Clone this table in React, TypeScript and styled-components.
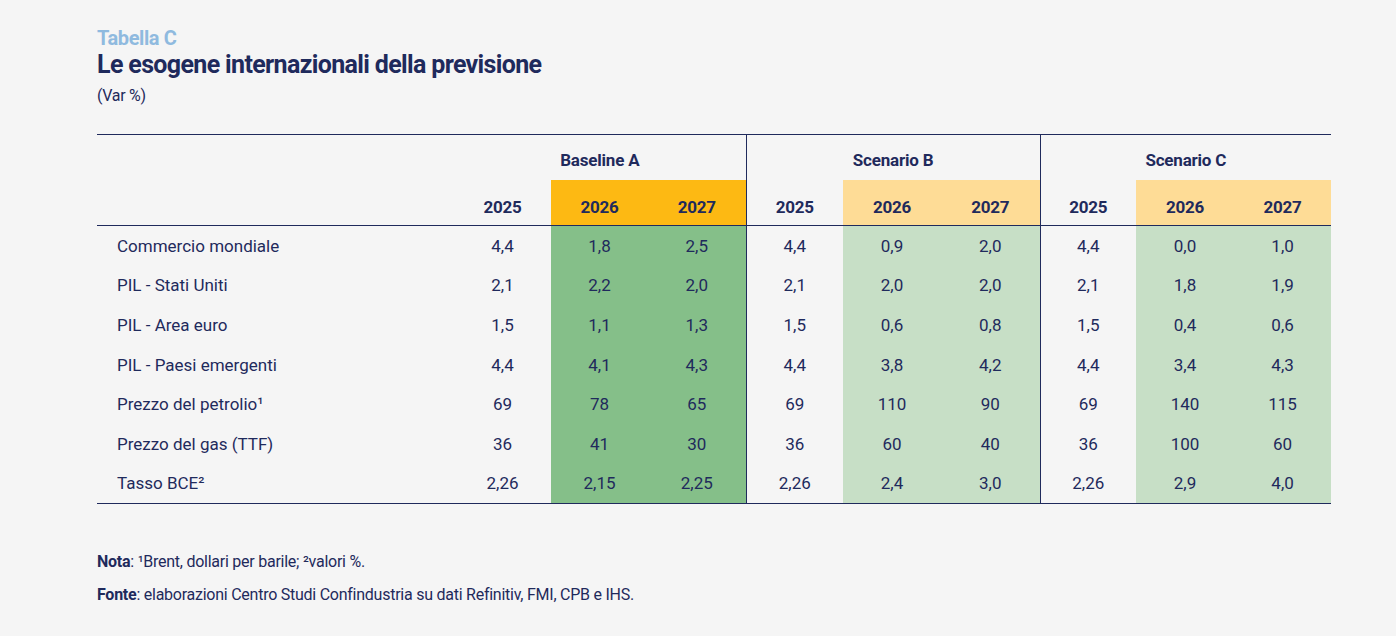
import styled, { createGlobalStyle } from "styled-components";

const GlobalStyle = createGlobalStyle`
  body {
    margin: 0;
    background: #f5f5f5;
    font-family: Roboto, "Liberation Sans", sans-serif;
    color: #1f2a5c;
  }
`;

const NAVY = "#1f2a5c";

const Page = styled.div`
  padding: 26px 65px 0 97px;
`;

const Kicker = styled.div`
  font-size: 20px;
  font-weight: 700;
  color: #8fbadf;
  line-height: 24px;
  letter-spacing: -0.4px;
`;

const Title = styled.h1`
  margin: 0;
  font-size: 25px;
  font-weight: 700;
  line-height: 30px;
  letter-spacing: -0.65px;
  color: ${NAVY};
`;

const Unit = styled.div`
  margin-top: 6px;
  font-size: 16px;
  line-height: 20px;
  letter-spacing: -0.3px;
`;

const Table = styled.table`
  margin-top: 28px;
  width: 1234px;
  border-collapse: collapse;
  table-layout: fixed;
  border-top: 1px solid ${NAVY};
  border-bottom: 1.5px solid ${NAVY};
  font-size: 17px;
  letter-spacing: 0;
`;

type Tone = "none" | "orange" | "lightOrange" | "green" | "lightGreen";

const tones: Record<Tone, string> = {
  none: "transparent",
  orange: "#fdb913",
  lightOrange: "#fedc96",
  green: "#85bf89",
  lightGreen: "#c7dfc6",
};

const GroupHead = styled.th<{ $sep?: boolean }>`
  height: 40px;
  padding: 5px 0 0 0;
  font-weight: 700;
  font-size: 17px;
  text-align: center;
  vertical-align: middle;
  letter-spacing: -0.2px;
  border-left: ${({ $sep }) => ($sep ? `1px solid ${NAVY}` : "none")};
`;

const YearHead = styled.th<{ $tone: Tone; $sep?: boolean }>`
  height: 37px;
  padding: 8px 0 0 0;
  font-weight: 700;
  font-size: 17px;
  text-align: center;
  vertical-align: middle;
  letter-spacing: -0.2px;
  background: ${({ $tone }) => tones[$tone]};
  border-bottom: 1px solid ${NAVY};
  border-left: ${({ $sep }) => ($sep ? `1px solid ${NAVY}` : "none")};
`;

const Label = styled.td`
  height: 39.6px;
  padding: 0 0 0 20px;
  text-align: left;
  vertical-align: middle;
`;

const Cell = styled.td<{ $tone: Tone; $sep?: boolean }>`
  height: 39.6px;
  padding: 0;
  text-align: center;
  vertical-align: middle;
  background: ${({ $tone }) => tones[$tone]};
  border-left: ${({ $sep }) => ($sep ? `1px solid ${NAVY}` : "none")};
`;

const Notes = styled.div`
  margin-top: 48px;
  display: flex;
  flex-direction: column;
  gap: 13px;
  font-size: 16px;
  line-height: 20px;
  letter-spacing: -0.25px;
`;

const Note = styled.p`
  margin: 0;
  b {
    font-weight: 700;
  }
`;

const rows: { label: string; values: string[] }[] = [
  { label: "Commercio mondiale", values: ["4,4", "1,8", "2,5", "4,4", "0,9", "2,0", "4,4", "0,0", "1,0"] },
  { label: "PIL - Stati Uniti", values: ["2,1", "2,2", "2,0", "2,1", "2,0", "2,0", "2,1", "1,8", "1,9"] },
  { label: "PIL - Area euro", values: ["1,5", "1,1", "1,3", "1,5", "0,6", "0,8", "1,5", "0,4", "0,6"] },
  { label: "PIL - Paesi emergenti", values: ["4,4", "4,1", "4,3", "4,4", "3,8", "4,2", "4,4", "3,4", "4,3"] },
  { label: "Prezzo del petrolio¹", values: ["69", "78", "65", "69", "110", "90", "69", "140", "115"] },
  { label: "Prezzo del gas (TTF)", values: ["36", "41", "30", "36", "60", "40", "36", "100", "60"] },
  { label: "Tasso BCE²", values: ["2,26", "2,15", "2,25", "2,26", "2,4", "3,0", "2,26", "2,9", "4,0"] },
];

const headTones: Tone[] = ["none", "orange", "orange", "none", "lightOrange", "lightOrange", "none", "lightOrange", "lightOrange"];
const bodyTones: Tone[] = ["none", "green", "green", "none", "lightGreen", "lightGreen", "none", "lightGreen", "lightGreen"];
const years = ["2025", "2026", "2027", "2025", "2026", "2027", "2025", "2026", "2027"];
const colWidths = [357, 97, 97, 98, 97, 98, 99, 96, 98, 97];

export default function App() {
  return (
    <>
      <GlobalStyle />
      <Page>
        <Kicker>Tabella C</Kicker>
        <Title>Le esogene internazionali della previsione</Title>
        <Unit>(Var %)</Unit>
        <Table>
          <colgroup>
            {colWidths.map((w, i) => (
              <col key={i} style={{ width: w }} />
            ))}
          </colgroup>
          <thead>
            <tr>
              <GroupHead />
              <GroupHead colSpan={3}>Baseline A</GroupHead>
              <GroupHead colSpan={3} $sep>
                Scenario B
              </GroupHead>
              <GroupHead colSpan={3} $sep>
                Scenario C
              </GroupHead>
            </tr>
            <tr>
              <YearHead $tone="none" />
              {years.map((y, i) => (
                <YearHead key={i} $tone={headTones[i]} $sep={i === 3 || i === 6}>
                  {y}
                </YearHead>
              ))}
            </tr>
          </thead>
          <tbody>
            {rows.map((r, ri) => (
              <tr key={ri}>
                <Label>{r.label}</Label>
                {r.values.map((v, i) => (
                  <Cell key={i} $tone={bodyTones[i]} $sep={i === 3 || i === 6}>
                    {v}
                  </Cell>
                ))}
              </tr>
            ))}
          </tbody>
        </Table>
        <Notes>
          <Note>
            <b>Nota</b>: ¹Brent, dollari per barile; ²valori %.
          </Note>
          <Note>
            <b>Fonte</b>: elaborazioni Centro Studi Confindustria su dati Refinitiv, FMI, CPB e IHS.
          </Note>
        </Notes>
      </Page>
    </>
  );
}
